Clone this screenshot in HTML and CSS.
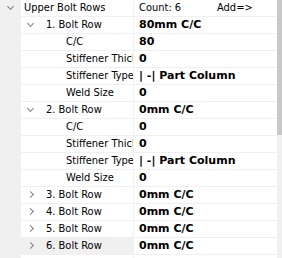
FILE: index.html
```html
<!DOCTYPE html>
<html lang="en">
<head>
    <meta charset="UTF-8">
    <title>Bolt Rows</title>
    <link rel="stylesheet" href="styles.css">
</head>
<body>
    <div class="panel">
        <div class="grid">
            <div class="row">
                <div class="gutter"><span class="chev open"></span></div>
                <div class="name lvl0">Upper Bolt Rows</div>
                <div class="value plain"><span class="count">Count: 6</span><span>Add=&gt;</span></div>
            </div>
            <div class="row">
                <div class="gutter"></div>
                <div class="name lvl1"><span class="chev open"></span>1. Bolt Row</div>
                <div class="value">80mm C/C</div>
            </div>
            <div class="row">
                <div class="gutter"></div>
                <div class="name lvl2">C/C</div>
                <div class="value">80</div>
            </div>
            <div class="row">
                <div class="gutter"></div>
                <div class="name lvl2">Stiffener Thickness</div>
                <div class="value">0</div>
            </div>
            <div class="row">
                <div class="gutter"></div>
                <div class="name lvl2">Stiffener Type</div>
                <div class="value">| -| Part Column</div>
            </div>
            <div class="row">
                <div class="gutter"></div>
                <div class="name lvl2">Weld Size</div>
                <div class="value">0</div>
            </div>
            <div class="row">
                <div class="gutter"></div>
                <div class="name lvl1"><span class="chev open"></span>2. Bolt Row</div>
                <div class="value">0mm C/C</div>
            </div>
            <div class="row">
                <div class="gutter"></div>
                <div class="name lvl2">C/C</div>
                <div class="value">0</div>
            </div>
            <div class="row">
                <div class="gutter"></div>
                <div class="name lvl2">Stiffener Thickness</div>
                <div class="value">0</div>
            </div>
            <div class="row">
                <div class="gutter"></div>
                <div class="name lvl2">Stiffener Type</div>
                <div class="value">| -| Part Column</div>
            </div>
            <div class="row">
                <div class="gutter"></div>
                <div class="name lvl2">Weld Size</div>
                <div class="value">0</div>
            </div>
            <div class="row">
                <div class="gutter"></div>
                <div class="name lvl1"><span class="chev"></span>3. Bolt Row</div>
                <div class="value">0mm C/C</div>
            </div>
            <div class="row">
                <div class="gutter"></div>
                <div class="name lvl1"><span class="chev"></span>4. Bolt Row</div>
                <div class="value">0mm C/C</div>
            </div>
            <div class="row">
                <div class="gutter"></div>
                <div class="name lvl1"><span class="chev"></span>5. Bolt Row</div>
                <div class="value">0mm C/C</div>
            </div>
            <div class="row selected">
                <div class="gutter"></div>
                <div class="name lvl1"><span class="chev"></span>6. Bolt Row</div>
                <div class="value">0mm C/C</div>
            </div>
            <div class="row">
                <div class="gutter"></div>
                <div class="name lvl1"></div>
                <div class="value"></div>
            </div>
        </div>
        <div class="scrollbar"><div class="thumb"></div></div>
    </div>
</body>
</html>
```
FILE: styles.css
```css
body {
  margin: 0;
  font-family: "DejaVu Sans Condensed", "DejaVu Sans", sans-serif;
  font-size: 11px;
  color: #000;
  background-color: #fff;
}

.panel {
  display: flex;
  width: 282px;
  height: 258px;
  overflow: hidden;
}

.grid {
  width: 277px;
}

.row {
  display: flex;
  height: 17px;
}

.gutter {
  width: 21px;
  flex: none;
  background-color: #f0f0f0;
  position: relative;
}

.name, .value {
  border-bottom: 1px solid #f0f0f0;
  height: 16px;
  line-height: 16px;
  white-space: nowrap;
  overflow: hidden;
}

.name {
  width: 112px;
  flex: none;
  border-right: 1px solid #f0f0f0;
  display: flex;
  align-items: center;
}

.value {
  flex: 1;
  padding-left: 5px;
  font-family: "DejaVu Sans", sans-serif;
  font-weight: bold;
}

.value.plain {
  font-family: "DejaVu Sans Condensed", "DejaVu Sans", sans-serif;
  font-weight: normal;
  display: flex;
}

.count {
  width: 78px;
}

.lvl0 { padding-left: 3px; width: 109px; }
.lvl1 { padding-left: 6px; width: 106px; }
.lvl2 { padding-left: 45px; width: 67px; }

.selected .name {
  background-color: #f0f0f0;
}

/* chevrons */
.chev {
  width: 8px;
  height: 8px;
  margin-right: 11px;
  flex: none;
  position: relative;
}

.chev::before {
  content: "";
  position: absolute;
  left: 1px;
  top: 1px;
  width: 4px;
  height: 4px;
  border-right: 1.5px solid #808080;
  border-bottom: 1.5px solid #808080;
  transform: rotate(-45deg);
}

.chev.open::before {
  left: 1px;
  top: 0px;
  transform: rotate(45deg);
}

.gutter .chev {
  position: absolute;
  left: 7px;
  top: 4px;
}

.scrollbar {
  width: 5px;
  background-color: #f0f0f0;
}

.thumb {
  height: 135px;
  background-color: #c8c8c8;
}
```
